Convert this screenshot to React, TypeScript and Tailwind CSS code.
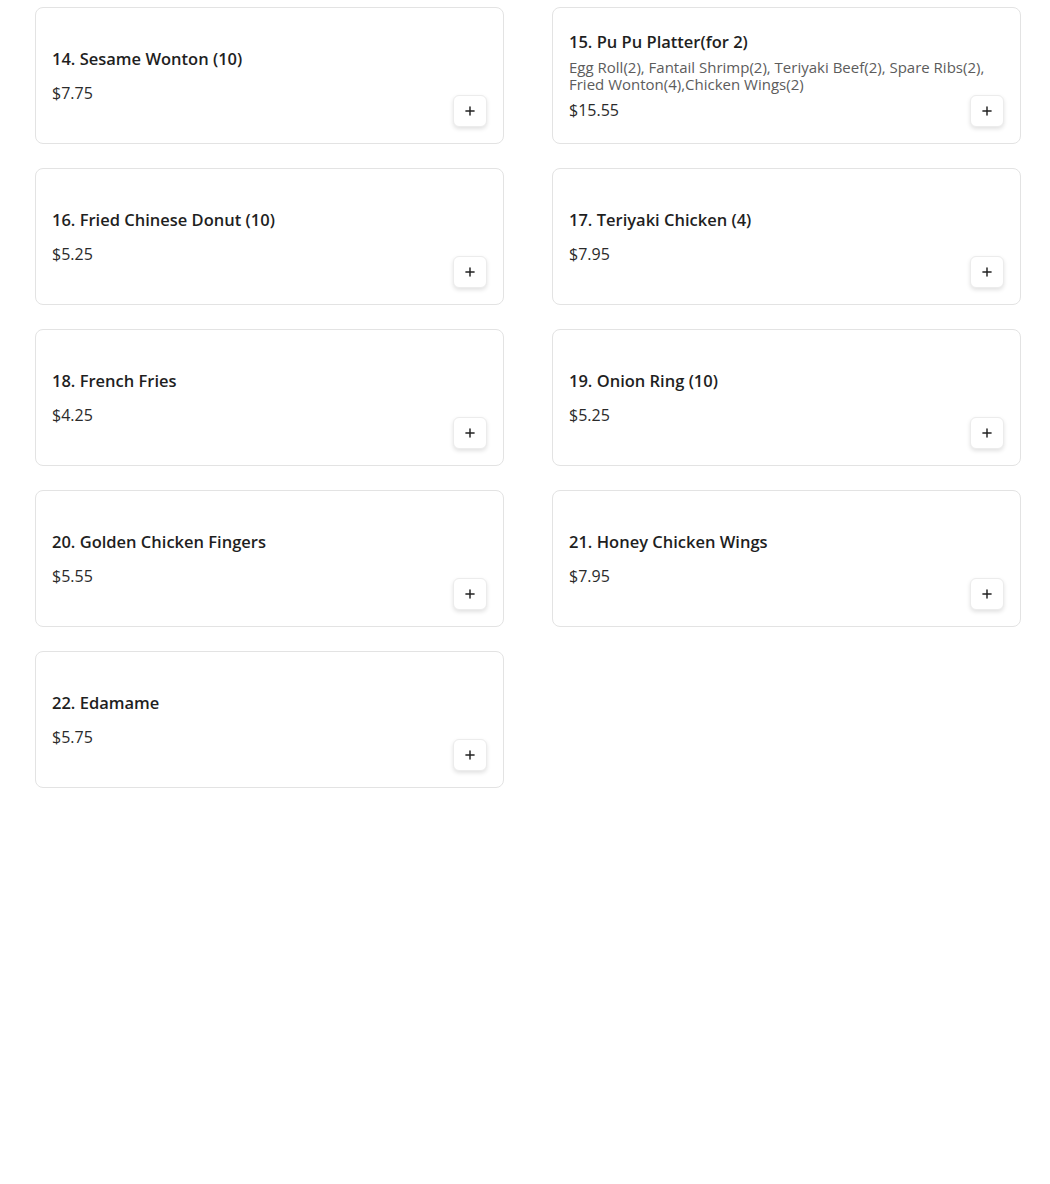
import { Plus } from 'lucide-react';

interface MenuItem {
  id: number;
  name: string;
  desc?: string;
  price: string;
}

const items: MenuItem[] = [
  { id: 14, name: '14. Sesame Wonton (10)', price: '$7.75' },
  {
    id: 15,
    name: '15. Pu Pu Platter(for 2)',
    desc: 'Egg Roll(2), Fantail Shrimp(2), Teriyaki Beef(2), Spare Ribs(2), Fried Wonton(4),Chicken Wings(2)',
    price: '$15.55',
  },
  { id: 16, name: '16. Fried Chinese Donut (10)', price: '$5.25' },
  { id: 17, name: '17. Teriyaki Chicken (4)', price: '$7.95' },
  { id: 18, name: '18. French Fries', price: '$4.25' },
  { id: 19, name: '19. Onion Ring (10)', price: '$5.25' },
  { id: 20, name: '20. Golden Chicken Fingers', price: '$5.55' },
  { id: 21, name: '21. Honey Chicken Wings', price: '$7.95' },
  { id: 22, name: '22. Edamame', price: '$5.75' },
];

function ItemCard({ item }: { item: MenuItem }) {
  return (
    <div className="relative flex h-[137px] flex-col justify-center rounded-lg border border-[#e3e3e3] bg-white p-4">
      <div className="text-[16.5px] font-semibold leading-6 text-[#1f1f1f]">{item.name}</div>
      {item.desc && (
        <div className="mt-[5px] text-[15px] leading-[17px] text-[#5c5c5c]">{item.desc}</div>
      )}
      <div className={`${item.desc ? 'mt-[5px]' : 'mt-[10px]'} text-[16px] leading-6 text-[#2b2b2b]`}>{item.price}</div>
      {/* add-to-cart button sits in the bottom right corner over the text area */}
      <button className="absolute bottom-4 right-4 flex h-8 w-[34px] items-center justify-center rounded-md border border-[#ececec] bg-white shadow-[0_2px_4px_rgba(0,0,0,0.12)]">
        <Plus className="h-3.5 w-3.5 text-[#222]" strokeWidth={2.5} />
      </button>
    </div>
  );
}

export default function App() {
  return (
    <div className="min-h-[1184px] bg-white pl-[35px] pr-[29px] pt-[7px]" style={{ fontFamily: '"Open Sans", "Liberation Sans", sans-serif' }}>
      <div className="grid grid-cols-2 gap-x-12 gap-y-6">
        {items.map((it) => (
          <ItemCard key={it.id} item={it} />
        ))}
      </div>
    </div>
  );
}
